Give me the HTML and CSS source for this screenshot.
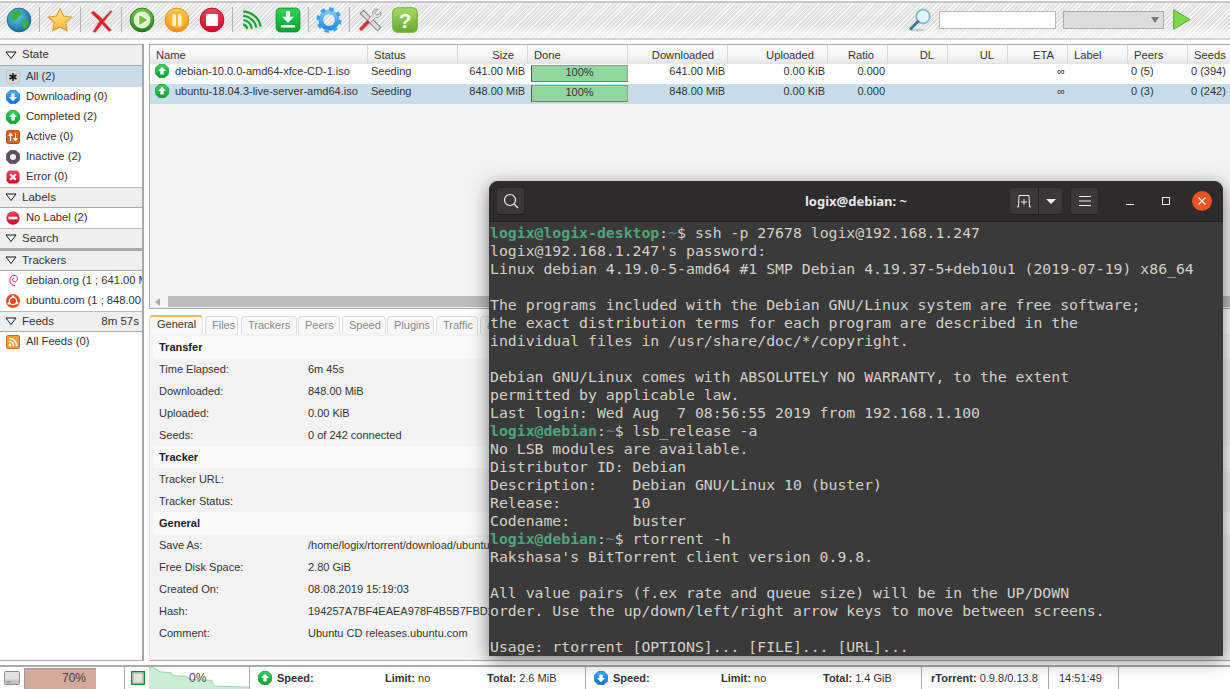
FILE: index.html
```html
<!DOCTYPE html>
<html lang="en">
<head>
<meta charset="utf-8">
<title>ruTorrent</title>
<link rel="stylesheet" href="styles.css">
</head>
<body>
<svg class="defs" width="0" height="0" aria-hidden="true">
  <defs>
    <linearGradient id="gGreen" x1="0" y1="0" x2="0" y2="1"><stop offset="0" stop-color="#35d35a"/><stop offset="1" stop-color="#05a32a"/></linearGradient>
    <linearGradient id="gBlue" x1="0" y1="0" x2="0" y2="1"><stop offset="0" stop-color="#3fb2fb"/><stop offset="1" stop-color="#0a6fe0"/></linearGradient>
    <linearGradient id="gRed" x1="0" y1="0" x2="0" y2="1"><stop offset="0" stop-color="#f4405a"/><stop offset="1" stop-color="#cf0a2a"/></linearGradient>
    <linearGradient id="gOrange" x1="0" y1="0" x2="0" y2="1"><stop offset="0" stop-color="#ffce55"/><stop offset="1" stop-color="#f58a0f"/></linearGradient>
    <linearGradient id="gPlay" x1="0" y1="0" x2="0" y2="1"><stop offset="0" stop-color="#7fc94a"/><stop offset="1" stop-color="#1f7f20"/></linearGradient>
    <linearGradient id="gStar" x1="0" y1="0" x2="0" y2="1"><stop offset="0" stop-color="#ffe98a"/><stop offset="1" stop-color="#f8b63a"/></linearGradient>
    <linearGradient id="gHelp" x1="0" y1="0" x2="0" y2="1"><stop offset="0" stop-color="#a9da66"/><stop offset="1" stop-color="#62ab2c"/></linearGradient>
    <linearGradient id="gGear" x1="0" y1="0" x2="0" y2="1"><stop offset="0" stop-color="#7cc8f8"/><stop offset="1" stop-color="#1d8ee0"/></linearGradient>
    <radialGradient id="gGlobe" cx=".4" cy=".35" r=".75"><stop offset="0" stop-color="#5fd0ec"/><stop offset="1" stop-color="#0d5f8c"/></radialGradient>
    <symbol id="i-up" viewBox="0 0 14 14"><path d="M4 .5h6L13.5 4v6L10 13.500H4L.5 10V4z" fill="url(#gGreen)" stroke="#068a25" stroke-width=".6"/><path d="M7 2.800 11 7H8.700v3.600H5.300V7H3z" fill="#fff"/></symbol>
    <symbol id="i-down" viewBox="0 0 14 14"><path d="M4 .5h6L13.500 4v6L10 13.500H4L.5 10V4z" fill="url(#gBlue)" stroke="#0a5fc0" stroke-width=".6"/><path d="M7 11.200 11 7H8.700V3.400H5.300V7H3z" fill="#fff"/></symbol>
    <symbol id="i-all" viewBox="0 0 14 14"><rect x=".5" y=".5" width="13" height="13" rx="2.500" fill="#d9d9d6" stroke="#c4c4c0"/><path d="M7 3v8M3.500 5l7 4M10.500 5l-7 4" stroke="#111" stroke-width="1.500"/></symbol>
    <symbol id="i-active" viewBox="0 0 14 14"><rect x=".5" y=".5" width="13" height="13" rx="2" fill="#d9661f" stroke="#b54d10"/><path d="M4.500 11V5M2.700 5.500 4.500 3l1.800 2.500zM9.500 3v6M7.700 8.500 9.500 11l1.800-2.500z" fill="#fff" stroke="#fff" stroke-width="1"/></symbol>
    <symbol id="i-inactive" viewBox="0 0 14 14"><path d="M4 .5h6L13.500 4v6L10 13.500H4L.5 10V4z" fill="#5d4f60" stroke="#443848" stroke-width=".6"/><circle cx="7" cy="7" r="3" fill="#f5f5f5"/></symbol>
    <symbol id="i-error" viewBox="0 0 14 14"><path d="M3 .5h8L13.500 3v8L11 13.500H3L.5 11V3z" fill="url(#gRed)"/><path d="M4.200 4.200l5.600 5.600M9.800 4.200l-5.600 5.600" stroke="#fff" stroke-width="2.200"/></symbol>
    <symbol id="i-nolabel" viewBox="0 0 14 14"><circle cx="7" cy="7" r="6.700" fill="url(#gRed)"/><rect x="2.500" y="5.700" width="9" height="2.600" fill="#fff"/></symbol>
    <symbol id="i-debian" viewBox="0 0 14 16"><path d="M9.500 13.500C6 13 3.400 10.500 3.400 7.200 3.400 4 5.600 1.500 8.200 1.500c2.400 0 4 1.800 4 3.800 0 2-1.500 3.500-3.200 3.500-1.500 0-2.500-1-2.500-2.300 0-1 .7-1.800 1.700-1.800" fill="none" stroke="#d70a53" stroke-width="1"/></symbol>
    <symbol id="i-ubuntu" viewBox="0 0 16 16"><circle cx="8" cy="8" r="8" fill="#e9471e"/><circle cx="8" cy="8" r="4.200" fill="none" stroke="#fff" stroke-width="1.500"/><circle cx="8" cy="2.800" r="1.500" fill="#fff"/><circle cx="3.400" cy="10.600" r="1.500" fill="#fff"/><circle cx="12.600" cy="10.600" r="1.500" fill="#fff"/></symbol>
    <symbol id="i-rss" viewBox="0 0 14 14"><rect x=".5" y=".5" width="13" height="13" rx="1.500" fill="#f39a3c" stroke="#cf6a1a"/><circle cx="4" cy="10" r="1.400" fill="#fff"/><path d="M2.800 6.200a5 5 0 0 1 5 5M2.800 3.200a8 8 0 0 1 8 8" fill="none" stroke="#fff" stroke-width="1.500"/></symbol>
    <symbol id="i-tri" viewBox="0 0 12 9"><path d="M1 1h10L6 7.500z" fill="#fff" stroke="#111" stroke-width="1"/></symbol>
  </defs>
</svg>

<header class="toolbar">
  <div class="tool"><svg viewBox="0 0 24 24"><circle cx="12" cy="12" r="11" fill="url(#gGlobe)" stroke="#0a5a80" stroke-width=".6"/><path d="M7 4c3-2 6-1 7 1s-2 3-3 5-3 3-5 2-3-5 1-8zM15 12c2-1 5 0 6 2s-2 6-4 6-3-6-2-8z" fill="#3fae3c"/></svg></div>
  <span class="sep"></span>
  <div class="tool"><svg viewBox="0 0 24 24"><path d="M12 1.500 15.300 8.300l7.400 1-5.400 5.200 1.300 7.400L12 18.400l-6.600 3.500 1.300-7.400L1.300 9.300l7.400-1z" fill="url(#gStar)" stroke="#d79a3a" stroke-width="1"/></svg></div>
  <span class="sep"></span>
  <div class="tool"><svg viewBox="0 0 24 24"><path d="M2.500 5.500 5 3.500c4 3 7 6 8.500 7.500L21 3l1.500 1L15 13.500 22 21.500l-2.500 1.500-6.500-7-6 7.500-3-.5L10.500 13z" fill="#dd2430" stroke="#c6c6c6" stroke-width=".6"/></svg></div>
  <span class="sep"></span>
  <div class="tool"><svg viewBox="0 0 24 24"><circle cx="12" cy="12" r="11" fill="url(#gPlay)" stroke="#1c6f1c" stroke-width=".8"/><circle cx="12" cy="12" r="7.800" fill="#dff3cf"/><path d="M9 6.500 18 12l-9 5.500z" fill="#6fbf3a" stroke="#fff"/></svg></div>
  <div class="tool tool-near"><svg viewBox="0 0 24 24"><circle cx="12" cy="12" r="11" fill="url(#gOrange)" stroke="#e08a1a" stroke-width=".8"/><circle cx="12" cy="12" r="7.800" fill="#fcb536"/><rect x="7.800" y="6.500" width="3.200" height="11" rx=".8" fill="#fff3d8"/><rect x="13" y="6.500" width="3.200" height="11" rx=".8" fill="#fff3d8"/></svg></div>
  <div class="tool tool-near"><svg viewBox="0 0 24 24"><circle cx="12" cy="12" r="11" fill="url(#gRed)" stroke="#a50a22" stroke-width=".8"/><rect x="6.500" y="6.500" width="11" height="11" fill="#fff"/></svg></div>
  <span class="sep"></span>
  <div class="tool"><svg viewBox="0 0 24 24"><path d="M3 3c10 0 18 8 19 16l-3.500 2.500H4z" fill="#d6ecd6"/><path d="M3 4c9 1 15 7 16 14M3 8c6 1 11 5 12 11M3 12c4 .5 7 3.500 8 8M3 16c2 .5 3 2 4 4" fill="none" stroke="#1f9a3a" stroke-width="2"/></svg></div>
  <div class="tool tool-near"><svg viewBox="0 0 24 24"><rect x="1" y="1" width="22" height="22" rx="4" fill="url(#gGreen)" stroke="#06932a" stroke-width=".8"/><path d="M12 14.500 6.500 9H10V4h4v5h3.500zM5.500 16.500h13v2.500h-13z" fill="#fff"/></svg></div>
  <span class="sep"></span>
  <div class="tool"><svg viewBox="0 0 24 24"><circle cx="12" cy="12" r="7.600" fill="none" stroke="url(#gGear)" stroke-width="4.400"/><circle cx="12" cy="12" r="10" fill="none" stroke="#3aa0ea" stroke-width="3.400" stroke-dasharray="3.900 3.950"/></svg></div>
  <span class="sep"></span>
  <div class="tool"><svg viewBox="0 0 24 24"><path d="M3 6 6 3l16 16-3 3z" fill="#dcdcdc" stroke="#8a8a8a"/><path d="M22 4.500c.8 2.500-1 6-4.500 5L6 21c-1.500 1.500-4-1-2.500-2.500L14.500 7C13.800 3.500 17 1.300 19.500 2l-3 3 .8 2 2 .5z" fill="#e8e8e8" stroke="#8a8a8a" stroke-width=".8"/><path d="M2.500 19.500 10 12l2 2-7.500 7.500c-1 1-3-1-2-2z" fill="#dd2a2a"/></svg></div>
  <div class="tool tool-near"><svg viewBox="0 0 24 24"><rect x=".7" y=".7" width="22.600" height="22.600" rx="4.500" fill="url(#gHelp)" stroke="#6fb23a"/><text x="12" y="19" text-anchor="middle" class="help-mark">?</text></svg></div>
  <div class="tool-right">
    <svg class="lens" viewBox="0 0 24 24"><ellipse cx="9" cy="22" rx="8" ry="1.500" fill="#c9c9c9"/><circle cx="15" cy="8.500" r="6.800" fill="#e5f4fb" stroke="#7fb6cf" stroke-width="1.800"/><path d="M10 13.500 3 20.500" stroke="#37789a" stroke-width="3" stroke-linecap="round"/></svg>
    <span class="search-box"></span>
    <span class="search-select"><span class="select-arrow"></span></span>
    <svg class="go" viewBox="0 0 18 21"><path d="M.7.7 17 10.500.7 20.300z" fill="#7fd84a" stroke="#4fae2f"/></svg>
  </div>
</header>

<main class="workspace">
  <aside class="sidebar">
    <div class="cat cat-first"><svg class="tri"><use href="#i-tri"/></svg>State</div>
    <div class="item selected first-item"><svg class="ico"><use href="#i-all"/></svg>All (2)</div>
    <div class="item"><svg class="ico"><use href="#i-down"/></svg>Downloading (0)</div>
    <div class="item"><svg class="ico"><use href="#i-up"/></svg>Completed (2)</div>
    <div class="item"><svg class="ico"><use href="#i-active"/></svg>Active (0)</div>
    <div class="item"><svg class="ico"><use href="#i-inactive"/></svg>Inactive (2)</div>
    <div class="item"><svg class="ico"><use href="#i-error"/></svg>Error (0)</div>
    <div class="cat"><svg class="tri"><use href="#i-tri"/></svg>Labels</div>
    <div class="item"><svg class="ico"><use href="#i-nolabel"/></svg>No Label (2)</div>
    <div class="cat"><svg class="tri"><use href="#i-tri"/></svg>Search</div>
    <div class="cat cat-thick"><svg class="tri"><use href="#i-tri"/></svg>Trackers</div>
    <div class="item"><svg class="ico"><use href="#i-debian"/></svg>debian.org (1 ; 641.00 MiB)</div>
    <div class="item"><svg class="ico"><use href="#i-ubuntu"/></svg>ubuntu.com (1 ; 848.00 MiB)</div>
    <div class="cat"><svg class="tri"><use href="#i-tri"/></svg>Feeds<span class="cat-note">8m 57s</span></div>
    <div class="item"><svg class="ico"><use href="#i-rss"/></svg>All Feeds (0)</div>
  </aside>

  <section class="content">
    <div class="list">
      <div class="row head">
        <span>Name</span><span>Status</span><span class="r">Size</span><span>Done</span><span class="r">Downloaded</span><span class="r">Uploaded</span><span class="r">Ratio</span><span class="r">DL</span><span class="r">UL</span><span class="r">ETA</span><span>Label</span><span>Peers</span><span>Seeds</span>
      </div>
      <div class="row torrent">
        <span class="name"><svg class="ico"><use href="#i-up"/></svg>debian-10.0.0-amd64-xfce-CD-1.iso</span><span>Seeding</span><span class="r">641.00 MiB</span><span class="done"><b class="meter">100%</b></span><span class="r">641.00 MiB</span><span class="r">0.00 KiB</span><span class="r">0.000</span><span></span><span></span><span class="r">∞</span><span></span><span>0 (5)</span><span>0 (394)</span>
      </div>
      <div class="row torrent picked">
        <span class="name"><svg class="ico"><use href="#i-up"/></svg>ubuntu-18.04.3-live-server-amd64.iso</span><span>Seeding</span><span class="r">848.00 MiB</span><span class="done"><b class="meter">100%</b></span><span class="r">848.00 MiB</span><span class="r">0.00 KiB</span><span class="r">0.000</span><span></span><span></span><span class="r">∞</span><span></span><span>0 (3)</span><span>0 (242)</span>
      </div>
      <div class="list-fill"></div>
      <div class="hscroll"><span class="arrow"></span><span class="thumb"></span></div>
    </div>

    <nav class="tabs">
      <span class="tab on">General</span><span class="tab t-files">Files</span><span class="tab t-trackers">Trackers</span><span class="tab t-peers">Peers</span><span class="tab t-speed">Speed</span><span class="tab t-plugins">Plugins</span><span class="tab t-traffic">Traffic</span><span class="tab t-more">autotools</span>
    </nav>

    <div class="details">
      <div class="sect">Transfer</div>
      <div class="kv"><span>Time Elapsed:</span><span>6m 45s</span></div>
      <div class="kv"><span>Downloaded:</span><span>848.00 MiB</span></div>
      <div class="kv"><span>Uploaded:</span><span>0.00 KiB</span></div>
      <div class="kv"><span>Seeds:</span><span>0 of 242 connected</span></div>
      <div class="sect">Tracker</div>
      <div class="kv"><span>Tracker URL:</span><span></span></div>
      <div class="kv"><span>Tracker Status:</span><span></span></div>
      <div class="sect">General</div>
      <div class="kv"><span>Save As:</span><span>/home/logix/rtorrent/download/ubuntu-18.04.3-live-server-amd64.iso</span></div>
      <div class="kv"><span>Free Disk Space:</span><span>2.80 GiB</span></div>
      <div class="kv"><span>Created On:</span><span>08.08.2019 15:19:03</span></div>
      <div class="kv"><span>Hash:</span><span>194257A7BF4EAEA978F4B5B7FBD2C7A9B3B3F5A1</span></div>
      <div class="kv"><span>Comment:</span><span>Ubuntu CD releases.ubuntu.com</span></div>
    </div>
  </section>
</main>

<footer class="status">
  <div class="st st-disk">
    <svg class="disk" viewBox="0 0 16 14"><rect x=".5" y=".5" width="15" height="13" rx="1" fill="#e2e2e2" stroke="#8f8f8f"/><path d="M1 8.500h14v4.500H1z" fill="#c4c4c4"/><path d="M3 11h4" stroke="#888"/></svg>
    <span class="disk-bar">70%</span>
  </div>
  <div class="st st-graph">
    <svg class="chip" viewBox="0 0 14 14"><rect x=".5" y=".5" width="13" height="13" rx="1" fill="#c9c7bd" stroke="#0c8a35" stroke-width="1.500"/><rect x="3" y="3" width="8" height="8" fill="#e6e4da"/></svg>
    <span class="graph">
      <svg viewBox="0 0 100 23" preserveAspectRatio="none"><path d="M0 0 4 0 11 5 22 6 23 9 37 10 41 13 63 14 65 20 100 21 100 23 0 23z" fill="#cdeed6"/><path d="M0 0 4 0 11 5 22 6 23 9 37 10 41 13 63 14 65 20 100 21" fill="none" stroke="#8ed8a2"/></svg>
      <span class="graph-label">0%</span>
    </span>
  </div>
  <div class="st st-speed">
    <svg class="ico"><use href="#i-up"/></svg><b class="s-speed">Speed:</b><span class="s-limit"><b>Limit:</b> no</span><span class="s-total"><b>Total:</b> 2.6 MiB</span>
  </div>
  <div class="st st-speed st-speed2">
    <svg class="ico"><use href="#i-down"/></svg><b class="s-speed">Speed:</b><span class="s-limit"><b>Limit:</b> no</span><span class="s-total"><b>Total:</b> 1.4 GiB</span>
  </div>
  <div class="st st-ver"><span><b>rTorrent:</b> 0.9.8/0.13.8</span></div>
  <div class="st st-time">14:51:49</div>
</footer>

<div class="term">
  <div class="term-bar">
    <span class="tbtn tbtn-search"><svg viewBox="0 0 16 16"><circle cx="7" cy="7" r="5.500" fill="none" stroke="#eee" stroke-width="1.200"/><path d="M11 11l4 4" stroke="#eee" stroke-width="1.200"/></svg></span>
    <span class="term-title">logix@debian: ~</span>
    <span class="tsplit">
      <span class="tsplit-a"><svg viewBox="0 0 16 14"><path d="M1 13h1.500L3 1.500h10L13.500 13H15" fill="none" stroke="#eee"/><path d="M8 5v6M5 8h6" stroke="#eee"/></svg></span>
      <span class="tsplit-b"><span class="caret"></span></span>
    </span>
    <span class="tbtn tbtn-menu"><svg viewBox="0 0 14 12"><path d="M1 1.500h12M1 6h12M1 10.500h12" stroke="#eee" stroke-width="1"/></svg></span>
    <span class="wbtn"><svg viewBox="0 0 10 10"><path d="M1 8.500h8" stroke="#eee"/></svg></span>
    <span class="wbtn"><svg viewBox="0 0 10 10"><rect x="1.500" y="1.500" width="7" height="7" fill="none" stroke="#eee"/></svg></span>
    <span class="wclose"><svg viewBox="0 0 10 10"><path d="M1.500 1.500l7 7M8.500 1.500l-7 7" stroke="#fff" stroke-width="1.100"/></svg></span>
  </div>
<pre class="term-body"><b class="pg">logix@logix-desktop</b>:<i class="pt">~</i>$ ssh -p 27678 logix@192.168.1.247
logix@192.168.1.247's password: 
Linux debian 4.19.0-5-amd64 #1 SMP Debian 4.19.37-5+deb10u1 (2019-07-19) x86_64

The programs included with the Debian GNU/Linux system are free software;
the exact distribution terms for each program are described in the
individual files in /usr/share/doc/*/copyright.

Debian GNU/Linux comes with ABSOLUTELY NO WARRANTY, to the extent
permitted by applicable law.
Last login: Wed Aug  7 08:56:55 2019 from 192.168.1.100
<b class="pg">logix@debian</b>:<i class="pt">~</i>$ lsb_release -a
No LSB modules are available.
Distributor ID: Debian
Description:    Debian GNU/Linux 10 (buster)
Release:        10
Codename:       buster
<b class="pg">logix@debian</b>:<i class="pt">~</i>$ rtorrent -h
Rakshasa's BitTorrent client version 0.9.8.

All value pairs (f.ex rate and queue size) will be in the UP/DOWN
order. Use the up/down/left/right arrow keys to move between screens.

Usage: rtorrent [OPTIONS]... [FILE]... [URL]...</pre>
</div>
</body>
</html>
```

FILE: styles.css
```css
* { box-sizing: border-box; }
html, body { margin: 0; height: 100%; }
body {
  width: 1230px;
  height: 689px;
  overflow: hidden;
  display: flex;
  flex-direction: column;
  position: relative;
  background: #fff;
  font: 11px/1 "Liberation Sans", Arial, sans-serif;
  color: #222;
}
.defs { position: absolute; }
svg { display: block; }

/* toolbar */
.toolbar {
  height: 39px;
  margin-top: 1px;
  flex: none;
  display: flex;
  align-items: center;
  gap: 7px;
  padding: 0 0 2px 6px;
  border-top: 2px solid #c8c8c8;
  border-bottom: 2px solid #d4d4d4;
  background:
    repeating-linear-gradient(135deg, rgba(255,255,255,.75) 0 1px, rgba(255,255,255,0) 1px 3px),
    linear-gradient(#e6e6e6, #dedede 60%, #efefef 85%, #f3f3f3);
}
.tool { width: 26px; height: 26px; flex: none; }
.tool svg { width: 26px; height: 26px; }
.tool-near { margin-left: 2px; }
.sep { width: 1px; height: 25px; background: #b5b5b5; flex: none; }
.help-mark { font: bold 19px "Liberation Sans", sans-serif; fill: #fff; }
.tool-right { margin-left: auto; display: flex; align-items: center; padding-right: 39px; }
.lens { width: 24px; height: 24px; margin-right: 7px; }
.search-box { width: 117px; height: 18px; background: #fff; border: 1px solid #b9b9b9; margin-right: 7px; }
.search-select {
  width: 101px; height: 18px; background: #dcdcdc; border: 1px solid #ababab;
  margin-right: 9px; display: flex; align-items: center; justify-content: flex-end; padding-right: 4px;
}
.select-arrow { width: 0; height: 0; border: 4px solid transparent; border-top: 6px solid #777; border-bottom: 0; }
.go { width: 18px; height: 21px; }

/* workspace */
.workspace { flex: none; height: 617px; margin-top: 4px; display: flex; gap: 5px; }
.sidebar {
  width: 144px; flex: none; background: #fff; overflow: hidden;
  border-top: 1px solid #a8a8a8; border-bottom: 1px solid #a8a8a8; border-right: 2px solid #a8a8a8;
}
.cat {
  height: 21px; display: flex; align-items: center; padding-left: 5px;
  background: #efefef; border-bottom: 1px solid #aaa; border-top: 1px solid #bbb;
  color: #333; font-size: 11.5px; white-space: nowrap;
}
.cat-first { border-top: 0; height: 21px; }
.cat-thick { border-top: 2px solid #aaa; height: 22px; }
.tri { width: 12px; height: 9px; margin-right: 5px; flex: none; }
.cat-note { margin-left: auto; padding-right: 3px; }
.item {
  height: 20px; display: flex; align-items: center; padding-left: 6px;
  white-space: nowrap; color: #333; font-size: 11.2px;
}
.first-item { height: 21px; }
.item.selected { background: #c8dcea; }
.ico { width: 14px; height: 14px; margin-right: 6px; flex: none; }
.item .ico { margin-right: 6px; }

.content { flex: 1; min-width: 0; display: flex; flex-direction: column; }
.list {
  height: 265px; flex: none; display: flex; flex-direction: column; background: #f3f3f3;
  border: 1px solid #a8a8a8; border-right: 0; overflow: hidden;
}
.row {
  display: grid;
  grid-template-columns: 218px 90px 70px 100px 100px 100px 60px 60px 60px 60px 60px 60px 60px;
  flex: none;
  white-space: nowrap;
}
.row > span { overflow: hidden; padding: 0 3px; }
.row .r { text-align: right; padding-right: 3px; }
.head { height: 19px; background: linear-gradient(#fff, #f4f4f4 60%, #e4e4e4); align-items: center; }
.head > span {
  padding: 0 6px; border-right: 1px solid #d6d6d6; height: 19px; line-height: 20px; color: #333;
  font-size: 11.2px;
}
.head > .r { padding-right: 13px; }
.torrent { height: 20px; background: #fff; color: #333; align-items: start; line-height: 15px; }
.torrent > span { padding: 0 3px; }
.torrent > .r { padding-right: 3px; }
.picked { background: #c8dcea; }
.name { display: flex; align-items: flex-start; padding-left: 5px !important; }
.name .ico { margin: 0 6px 0 0; }
.torrent .done { padding: 1px 0 0 3px; }
.meter {
  display: block; width: 97px; height: 17px; background: #90d79d; border: 1px solid #9a9a9a;
  border-left-color: #555; font-weight: 400; text-align: center; line-height: 12px; color: #333;
  border-bottom-color: #777;
}
.list-fill { flex: 1; }
.hscroll { height: 13px; flex: none; display: flex; align-items: center; padding-left: 5px; margin-bottom: 0; }
.arrow { width: 0; height: 0; border: 4px solid transparent; border-right: 5px solid #aaa; border-left: 0; margin-right: 8px; }
.thumb { flex: 1; height: 11px; background: #bcbcbc; }

.tabs { height: 25px; flex: none; display: flex; align-items: flex-end; gap: 2px; padding-top: 6px; color: #888; }
.tab {
  height: 18px; border: 1px solid #dcdcdc; border-bottom: 0; border-radius: 4px 4px 0 0;
  padding: 3px 6px 0; background: #f8f8f8; overflow: hidden; white-space: nowrap; flex: none;
}
.tab.on { width: 54px; height: 19px; background: #f8f8f8; color: #333; border-color: #e2e2e2; border-top: 2px solid #f5b95b; padding: 2px 0 0 7px; }
.t-files { width: 33px; }
.t-trackers { width: 56px; margin-left: 1px; }
.t-peers { width: 42px; margin-left: -1px; }
.t-speed { width: 44px; }
.t-plugins { width: 47px; margin-left: -1px; }
.t-traffic { width: 42px; }
.t-more { width: 70px; }

.details { flex: 1; background: #f3f3f3; padding: 2px 0 0 3px; border-bottom: 1px solid #a8a8a8; border-left: 1px solid #e4e4e4; overflow: hidden; }
.sect { height: 22px; line-height: 22px; padding-left: 6px; background: #f9f9f9; font-weight: 700; color: #222; }
.kv { height: 22px; line-height: 22px; display: grid; grid-template-columns: 149px 1fr; padding-left: 6px; color: #333; white-space: nowrap; }

/* status bar */
.status {
  flex: 1; min-height: 0; margin-top: 4px; display: flex; border-top: 2px solid #aaa; background: #fff; overflow: hidden; color: #333;
}
.st { display: flex; align-items: center; border-right: 1px solid #aaa; flex: none; height: 100%; position: relative; }
.st-disk { width: 125px; padding-left: 4px; }
.disk { width: 16px; height: 14px; margin-right: 4px; }
.disk-bar { width: 72px; height: 100%; margin-top: 2px; background: #d3a999; text-align: right; padding: 3px 10px 0 0; font-size: 12px; color: #444; border: 1px solid #999; border-width: 1px 0 0 1px; }
.st-graph { width: 125px; padding-left: 6px; }
.chip { width: 14px; height: 14px; margin-right: 4px; }
.graph { width: 100px; height: 100%; position: relative; display: block; }
.graph svg { width: 100%; height: 100%; }
.graph-label { position: absolute; left: 40px; top: 5px; font-size: 12px; color: #444; }
.st-speed { width: 336px; padding-left: 8px; }
.st-speed .ico { margin-right: 5px; }
.s-speed { width: 108px; }
.s-limit { width: 102px; }
.st-ver { width: 127px; padding-left: 9px; }
.st-time { width: 70px; padding-left: 10px; }

/* terminal */
.term {
  position: absolute; left: 489px; top: 181px; width: 734px; height: 475px;
  border-radius: 9px 9px 0 0; overflow: hidden; background: #3a3a3a;
  box-shadow: 0 4px 18px rgba(0,0,0,.5);
  outline: 0;
}
.term-bar {
  height: 41px; background: #2d2b2b; border-bottom: 1px solid #222; display: flex; align-items: center; padding: 0 11px 0 7px; position: relative;
}
.tbtn, .tsplit {
  height: 28px; background: #3a3838; border: 1px solid #2a2828; border-bottom-color: #1e1d1d; border-radius: 4px;
  display: flex; align-items: center; justify-content: center; flex: none;
}
.tbtn-search { width: 29px; }
.tbtn-search svg { width: 16px; height: 16px; }
.term-title { position: absolute; left: 0; right: 0; text-align: center; font: 700 13px "Noto Sans", sans-serif; color: #e8e8e8; pointer-events: none; }
.tsplit { margin-left: auto; width: 54px; }
.tsplit-a { width: 29px; height: 100%; display: flex; align-items: center; justify-content: center; border-right: 1px solid #252323; }
.tsplit-a svg { width: 16px; height: 14px; }
.tsplit-b { flex: 1; display: flex; justify-content: center; }
.caret { width: 0; height: 0; border: 5px solid transparent; border-top: 5px solid #eee; border-bottom: 0; }
.tbtn-menu { width: 29px; margin-left: 7px; }
.tbtn-menu svg { width: 14px; height: 12px; }
.wbtn { width: 10px; height: 10px; margin-left: 26px; flex: none; }
.wbtn + .wbtn { margin-left: 26px; }
.wbtn svg { width: 10px; height: 10px; }
.wclose { width: 20px; height: 20px; border-radius: 50%; background: #e95420; margin-left: 21px; display: flex; align-items: center; justify-content: center; flex: none; }
.wclose svg { width: 10px; height: 10px; }
.term-body {
  margin: 0; padding: 2px 0 0 1px; font: 14.8px/18px "DejaVu Sans Mono", monospace; color: #d3d0c8; overflow: hidden; height: 434px;
}
.pg { color: #4ea67b; font-weight: 700; }
.pt { color: #5c7f99; font-style: normal; }
```
